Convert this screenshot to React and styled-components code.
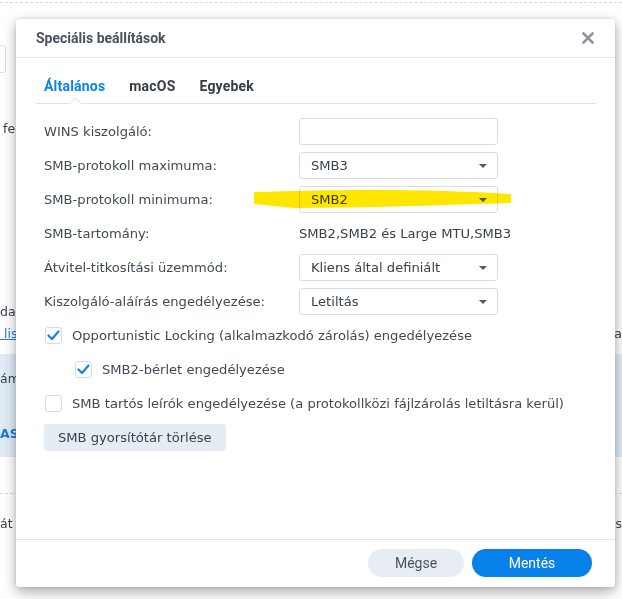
import styled, { createGlobalStyle } from "styled-components";

const GlobalStyle = createGlobalStyle`
  html, body {
    margin: 0;
    padding: 0;
    background: #ffffff;
  }
  body {
    font-family: "DejaVu Sans", Verdana, sans-serif;
  }
`;

const Screen = styled.div`
  position: relative;
  width: 622px;
  height: 599px;
  overflow: hidden;
  background: #ffffff;
`;

/* ---------- page behind the dialog ---------- */

const Backdrop = styled.div`
  display: flex;
  flex-direction: column;
  font-size: 12.5px;
  line-height: 16px;
  color: #3a424d;
`;

const Dashed = styled.div`
  margin-top: ${({ top }) => top}px;
  border-top: 1px dashed #d3dae2;
`;

const StubInput = styled.div`
  margin-top: 42px;
  margin-left: -12px;
  width: 16px;
  height: 26px;
  border: 1px solid #d9dee5;
  border-radius: 3px;
`;

const BgLine = styled.div`
  display: flex;
  justify-content: space-between;
  margin-top: ${({ top }) => top}px;
  padding-left: ${({ indent }) => indent ?? 3}px;
  white-space: nowrap;
`;

const BgLink = styled.span`
  color: #1d7fd8;
  text-decoration: underline;
`;

const Band = styled.div`
  margin-top: 12px;
  height: 103px;
  background: #e2ecf7;
  display: flex;
  flex-direction: column;
`;

const BandText = styled.div`
  margin-top: ${({ top }) => top}px;
  font-weight: ${({ bold }) => (bold ? 700 : 400)};
  color: ${({ bold }) => (bold ? "#1a7ad6" : "#3a424d")};
`;

/* ---------- dialog ---------- */

const Dialog = styled.div`
  position: absolute;
  left: 16px;
  top: 19px;
  width: 599px;
  height: 568px;
  background: #ffffff;
  border-radius: 3px;
  box-shadow: 0 5px 14px rgba(0, 0, 0, 0.32), 0 0 4px rgba(0, 0, 0, 0.12);
  display: flex;
  flex-direction: column;
`;

const Header = styled.div`
  height: 38px;
  border-bottom: 1px solid #e1e7ee;
  display: flex;
  align-items: center;
  justify-content: space-between;
  padding: 0 21px 0 20px;
`;

const Title = styled.div`
  font-family: Roboto, "Noto Sans", sans-serif;
  font-weight: 700;
  font-size: 14px;
  color: #4b515c;
`;

const CloseButton = styled.button`
  border: 0;
  background: none;
  padding: 0;
  width: 12px;
  height: 12px;
  display: flex;
  cursor: pointer;
`;

const Body = styled.div`
  flex: 1;
  padding: 0 19px 0 20px;
`;

const Tabs = styled.div`
  height: 45px;
  border-bottom: 1px solid #d9e3ed;
  display: flex;
  align-items: flex-end;
  gap: 24px;
  padding: 0 8px;
`;

const Tab = styled.div`
  position: relative;
  padding-bottom: 9px;
  font-family: Roboto, "Noto Sans", sans-serif;
  font-weight: 700;
  font-size: 14px;
  line-height: 16px;
  letter-spacing: 0.2px;
  color: ${({ active }) => (active ? "#0a84ea" : "#363c46")};

  ${({ active }) =>
    active &&
    `
    &::after {
      content: "";
      position: absolute;
      left: 27px;
      bottom: -5px;
      width: 8px;
      height: 8px;
      background: #ffffff;
      border-top: 1px solid #d9e3ed;
      border-left: 1px solid #d9e3ed;
      transform: rotate(45deg);
    }
  `}
`;

const Form = styled.div`
  position: relative;
  padding: 14px 8px 0;
  display: flex;
  flex-direction: column;
  gap: 7px;
  font-size: 13.1px;
  color: #414a55;
`;

const FieldRow = styled.div`
  display: grid;
  grid-template-columns: 255px 199px;
  align-items: center;
  height: 27px;
`;

const Label = styled.div`
  white-space: nowrap;
`;

const TextBox = styled.div`
  height: 25px;
  border: 1px solid #d9dee5;
  border-radius: 3px;
`;

const Select = styled.div`
  height: 25px;
  border: 1px solid #d9dee5;
  border-radius: 3px;
  display: flex;
  align-items: center;
  justify-content: space-between;
  padding: 0 10px 0 11px;
  color: #3a424d;
  white-space: nowrap;
`;

const Caret = styled.span`
  width: 0;
  height: 0;
  border-left: 4px solid transparent;
  border-right: 4px solid transparent;
  border-top: 4px solid #555b63;
`;

const Value = styled.div`
  white-space: nowrap;
  color: #3a424d;
`;

const CheckRow = styled.label`
  display: flex;
  align-items: center;
  gap: 10px;
  height: 27px;
  padding-left: ${({ indent }) => (indent ? 31 : 1)}px;
  white-space: nowrap;
`;

const Box = styled.span`
  width: 15px;
  height: 15px;
  border: 1px solid #d3dae2;
  border-radius: 3px;
  background: #ffffff;
  display: flex;
  align-items: center;
  justify-content: center;
  flex-shrink: 0;
`;

const ActionButton = styled.button`
  align-self: flex-start;
  height: 27px;
  padding: 0 14px;
  border: 0;
  border-radius: 3px;
  background: #e6ecf3;
  font-family: inherit;
  font-size: 13.1px;
  color: #3a424d;
`;

const Highlight = styled.svg`
  position: absolute;
  left: 218px;
  top: 83px;
  width: 258px;
  height: 22px;
  mix-blend-mode: multiply;
  pointer-events: none;
`;

const Footer = styled.div`
  border-top: 1px solid #e1e7ee;
  padding: 9px 23px 10px 0;
  display: flex;
  justify-content: flex-end;
  gap: 8px;
`;

const PillButton = styled.button`
  height: 28px;
  width: ${({ wide }) => (wide ? 120 : 96)}px;
  border: 0;
  border-radius: 14px;
  font-family: Roboto, "Noto Sans", sans-serif;
  font-size: 14px;
  background: ${({ primary }) => (primary ? "#0880ea" : "#e8edf3")};
  color: ${({ primary }) => (primary ? "#ffffff" : "#4a5260")};
`;

const Check = () => (
  <svg width="13" height="11" viewBox="0 0 13 11">
    <path d="M1.5 5.5 L5 9 L11.5 1.5" fill="none" stroke="#1683e8" strokeWidth="2.2" strokeLinecap="round" strokeLinejoin="round" />
  </svg>
);

const Checkbox = ({ checked, indent, children }) => (
  <CheckRow indent={indent}>
    <Box>{checked && <Check />}</Box>
    {children}
  </CheckRow>
);

export default function App() {
  return (
    <Screen>
      <GlobalStyle />
      <Backdrop>
        <Dashed top={2} />
        <StubInput />
        <BgLine top={48}>fe</BgLine>
        <BgLine top={167} indent={0}>
          <span>dal</span>
        </BgLine>
        <BgLine top={6} indent={0}>
          <BgLink>&nbsp;lis</BgLink>
          <span>a</span>
        </BgLine>
        <Band>
          <BandText top={17}>ám</BandText>
          <BandText top={39} bold>
            AS
          </BandText>
        </Band>
        <Dashed top={36} />
        <BgLine top={22} indent={0}>
          <span>át</span>
          <span>s</span>
        </BgLine>
      </Backdrop>

      <Dialog>
        <Header>
          <Title>Speciális beállítások</Title>
          <CloseButton aria-label="Bezárás">
            <svg width="12" height="12" viewBox="0 0 12 12">
              <path d="M1.5 1.5 L10.5 10.5 M10.5 1.5 L1.5 10.5" stroke="#8f959d" strokeWidth="2.6" strokeLinecap="square" />
            </svg>
          </CloseButton>
        </Header>

        <Body>
          <Tabs>
            <Tab active>Általános</Tab>
            <Tab>macOS</Tab>
            <Tab>Egyebek</Tab>
          </Tabs>

          <Form>
            <FieldRow>
              <Label>WINS kiszolgáló:</Label>
              <TextBox />
            </FieldRow>
            <FieldRow>
              <Label>SMB-protokoll maximuma:</Label>
              <Select>
                SMB3
                <Caret />
              </Select>
            </FieldRow>
            <FieldRow>
              <Label>SMB-protokoll minimuma:</Label>
              <Select>
                SMB2
                <Caret />
              </Select>
            </FieldRow>
            <FieldRow>
              <Label>SMB-tartomány:</Label>
              <Value>SMB2,SMB2 és Large MTU,SMB3</Value>
            </FieldRow>
            <FieldRow>
              <Label>Átvitel-titkosítási üzemmód:</Label>
              <Select>
                Kliens által definiált
                <Caret />
              </Select>
            </FieldRow>
            <FieldRow>
              <Label>Kiszolgáló-aláírás engedélyezése:</Label>
              <Select>
                Letiltás
                <Caret />
              </Select>
            </FieldRow>

            <Checkbox checked>Opportunistic Locking (alkalmazkodó zárolás) engedélyezése</Checkbox>
            <Checkbox checked indent>
              SMB2-bérlet engedélyezése
            </Checkbox>
            <Checkbox>SMB tartós leírók engedélyezése (a protokollközi fájlzárolás letiltásra kerül)</Checkbox>

            <ActionButton>SMB gyorsítótár törlése</ActionButton>

            <Highlight viewBox="0 0 258 22">
              <path
                d="M0 5 C70 3 160 1 257 7 L257 16 C190 18 110 21 40 21 L0 17 Z"
                fill="#ffe600"
              />
            </Highlight>
          </Form>
        </Body>

        <Footer>
          <PillButton>Mégse</PillButton>
          <PillButton primary wide>
            Mentés
          </PillButton>
        </Footer>
      </Dialog>
    </Screen>
  );
}
